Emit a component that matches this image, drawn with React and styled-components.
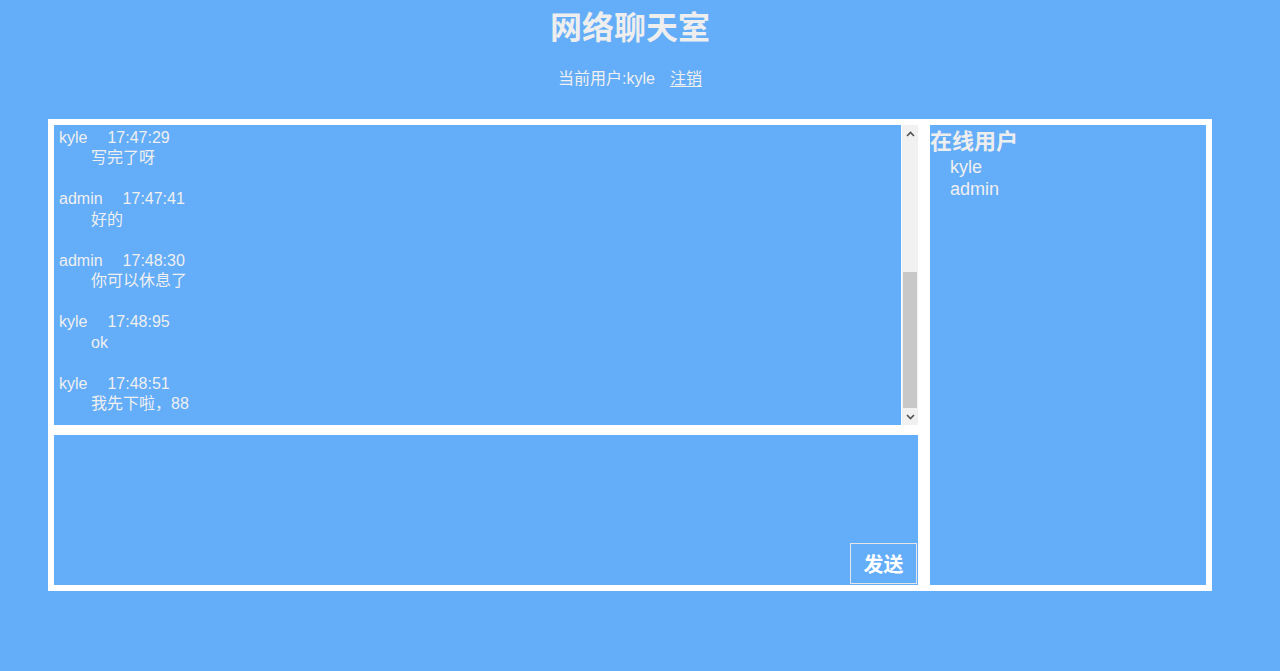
import React from 'react';
import styled, { createGlobalStyle } from 'styled-components';

const messages = [
  { user: 'kyle', time: '17:47:29', text: '写完了呀' },
  { user: 'admin', time: '17:47:41', text: '好的' },
  { user: 'admin', time: '17:48:30', text: '你可以休息了' },
  { user: 'kyle', time: '17:48:95', text: 'ok' },
  { user: 'kyle', time: '17:48:51', text: '我先下啦，88' },
];

const users = ['kyle', 'admin'];

const App = () => {
  return (
    <>
      <GlobalStyle />
      <Page>
        <Title>网络聊天室</Title>
        <UserBar>
          当前用户:kyle<Logout href="#">注销</Logout>
        </UserBar>
        <ChatFrame>
          <LeftColumn>
            <MessageBox>
              <MessageList>
                {messages.map((m, i) => (
                  <Message key={i}>
                    <MessageHead>
                      {m.user}
                      <Time>{m.time}</Time>
                    </MessageHead>
                    <MessageText>{m.text}</MessageText>
                  </Message>
                ))}
              </MessageList>
              <ScrollBar>
                <ScrollArrow>
                  <svg width="9" height="6" viewBox="0 0 9 6">
                    <path d="M1 5 L4.5 1.5 L8 5" fill="none" stroke="#505050" strokeWidth="1.6" />
                  </svg>
                </ScrollArrow>
                <ScrollTrack>
                  <ScrollThumb />
                </ScrollTrack>
                <ScrollArrow>
                  <svg width="9" height="6" viewBox="0 0 9 6">
                    <path d="M1 1 L4.5 4.5 L8 1" fill="none" stroke="#505050" strokeWidth="1.6" />
                  </svg>
                </ScrollArrow>
              </ScrollBar>
            </MessageBox>
            <InputBox>
              <TextInput />
              <SendButton>发送</SendButton>
            </InputBox>
          </LeftColumn>
          <OnlinePanel>
            <PanelTitle>在线用户</PanelTitle>
            {users.map((u) => (
              <OnlineUser key={u}>{u}</OnlineUser>
            ))}
          </OnlinePanel>
        </ChatFrame>
      </Page>
    </>
  );
};

const GlobalStyle = createGlobalStyle`
  html, body {
    margin: 0;
    padding: 0;
    background-color: #63adf9;
  }
  body {
    font-family: "Liberation Sans", Arial, "Noto Sans CJK SC", sans-serif;
    color: #f0f0f0;
  }
`;

const Page = styled.div`
  width: 1280px;
  min-height: 671px;
  display: flex;
  flex-direction: column;
  align-items: center;
`;
const Title = styled.h1`
  margin: 7px 0 0 -20px;
  font-size: 32px;
  line-height: 42px;
  font-weight: 700;
  color: #eeeeee;
`;
const UserBar = styled.div`
  margin: 20px 0 0 -20px;
  font-size: 16px;
  line-height: 20px;
  color: #f0f0f0;
`;
const Logout = styled.a`
  margin-left: 15px;
  color: #f0f0f0;
  text-decoration: underline solid #f0f0f0 1px;
  text-underline-offset: 2px;
`;
const ChatFrame = styled.div`
  margin: 30px 0 0 -20px;
  display: flex;
  gap: 12px;
  padding: 6px;
  background-color: #ffffff;
`;
const LeftColumn = styled.div`
  display: flex;
  flex-direction: column;
  gap: 10px;
  width: 864px;
`;
const MessageBox = styled.div`
  display: flex;
  height: 300px;
  background-color: #63adf9;
`;
const MessageList = styled.div`
  flex: 1;
  overflow: hidden;
  display: flex;
  flex-direction: column;
  justify-content: flex-end;
  padding: 0 5px 10.5px;
`;
const Message = styled.div`
  font-size: 16px;
  line-height: 20.5px;
  &:not(:last-child) {
    margin-bottom: 20.5px;
  }
`;
const MessageHead = styled.div`
  display: flex;
`;
const Time = styled.span`
  margin-left: 20px;
`;
const MessageText = styled.div`
  padding-left: 32px;
`;
const ScrollBar = styled.div`
  width: 17px;
  display: flex;
  flex-direction: column;
  background-color: #f1f1f1;
  border-left: 1px solid #ffffff;
  box-sizing: border-box;
`;
const ScrollArrow = styled.div`
  height: 17px;
  display: flex;
  align-items: center;
  justify-content: center;
`;
const ScrollTrack = styled.div`
  flex: 1;
  display: flex;
  flex-direction: column;
  justify-content: flex-end;
  padding: 0 1px;
`;
const ScrollThumb = styled.div`
  height: 136px;
  background-color: #c8c8c8;
`;
const InputBox = styled.div`
  height: 150px;
  display: flex;
  flex-direction: column;
  background-color: #63adf9;
`;
const TextInput = styled.textarea`
  flex: 1;
  border: none;
  outline: none;
  resize: none;
  background: transparent;
  color: #f0f0f0;
  font-family: inherit;
  font-size: 16px;
`;
const SendButton = styled.button`
  align-self: flex-end;
  width: 67px;
  height: 41px;
  margin: 0 1px 1px 0;
  border: 1px solid #e6e6e6;
  background: transparent;
  color: #ffffff;
  font-family: "Liberation Sans", "Noto Sans CJK SC", sans-serif;
  font-size: 20px;
  font-weight: 700;
  cursor: pointer;
`;
const OnlinePanel = styled.div`
  width: 276px;
  height: 460px;
  background-color: #63adf9;
`;
const PanelTitle = styled.div`
  margin: 4px 0 1px;
  font-size: 22px;
  line-height: 26px;
  font-weight: 700;
  color: #eeeeee;
`;
const OnlineUser = styled.div`
  padding-left: 20px;
  font-size: 18px;
  line-height: 22px;
`;

export default App;
